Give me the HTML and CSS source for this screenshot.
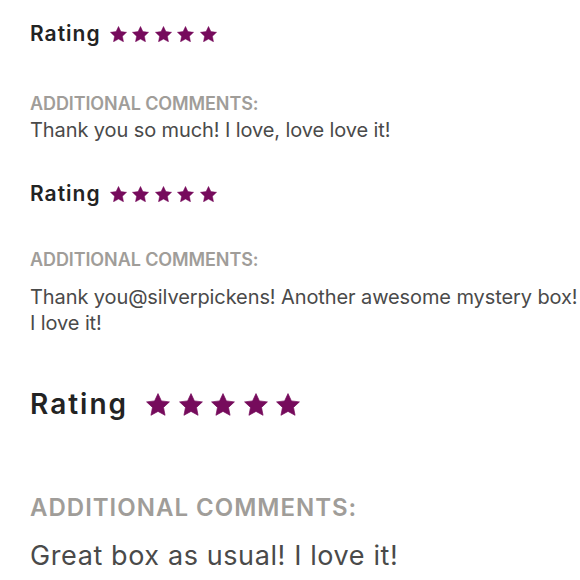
FILE: index.html
```html
<!DOCTYPE html>
<html>
<head>
<meta charset="utf-8">
<link rel="stylesheet" href="styles.css">
</head>
<body>
<svg width="0" height="0" class="defs">
  <defs>
    <symbol id="star" viewBox="0 0 24 23">
      <path d="M12 0.6 L15.41 7.91 L23.41 8.89 L17.52 14.39 L19.05 22.31 L12 18.4 L4.95 22.31 L6.48 14.39 L0.59 8.89 L8.59 7.91 Z" stroke-linejoin="round"/>
    </symbol>
  </defs>
</svg>
<main class="page">
  <section class="review review-one">
    <div class="rating-row">
      <span class="rating-label">Rating</span>
      <span class="stars">
        <svg class="star"><use href="#star"/></svg>
        <svg class="star"><use href="#star"/></svg>
        <svg class="star"><use href="#star"/></svg>
        <svg class="star"><use href="#star"/></svg>
        <svg class="star"><use href="#star"/></svg>
      </span>
    </div>
    <div class="comments-label">ADDITIONAL COMMENTS:</div>
    <p class="comment">Thank you so much! I love, love love it!</p>
  </section>
  <section class="review review-two">
    <div class="rating-row">
      <span class="rating-label">Rating</span>
      <span class="stars">
        <svg class="star"><use href="#star"/></svg>
        <svg class="star"><use href="#star"/></svg>
        <svg class="star"><use href="#star"/></svg>
        <svg class="star"><use href="#star"/></svg>
        <svg class="star"><use href="#star"/></svg>
      </span>
    </div>
    <div class="comments-label">ADDITIONAL COMMENTS:</div>
    <p class="comment">Thank you@silverpickens! Another awesome mystery box!<br>I love it!</p>
  </section>
  <section class="review review-three">
    <div class="rating-row">
      <span class="rating-label">Rating</span>
      <span class="stars">
        <svg class="star"><use href="#star"/></svg>
        <svg class="star"><use href="#star"/></svg>
        <svg class="star"><use href="#star"/></svg>
        <svg class="star"><use href="#star"/></svg>
        <svg class="star"><use href="#star"/></svg>
      </span>
    </div>
    <div class="comments-label">ADDITIONAL COMMENTS:</div>
    <p class="comment">Great box as usual! I love it!</p>
  </section>
</main>
</body>
</html>
```

FILE: styles.css
```css
html, body {
  margin: 0;
  padding: 0;
  background: #ffffff;
}

.defs {
  position: absolute;
  width: 0;
  height: 0;
  overflow: hidden;
}

.page {
  padding: 22px 0 0 30px;
  font-family: Inter, "Open Sans", sans-serif;
  overflow: hidden;
  height: 558px;
  white-space: nowrap;
}

.review {
  display: flex;
  flex-direction: column;
}

.rating-row {
  display: flex;
  align-items: center;
  height: 24px;
}

.rating-label {
  font-size: 21px;
  line-height: 24px;
  font-weight: 600;
  letter-spacing: 1px;
  color: #232323;
}

.stars {
  display: flex;
  gap: 5.6px;
  margin-left: 9px;
}

.star {
  width: 17px;
  height: 16.3px;
  fill: #760b5c;
  stroke: #760b5c;
  stroke-width: 0.7;
}

.comments-label {
  font-size: 18px;
  line-height: 22px;
  font-weight: 600;
  letter-spacing: -0.1px;
  color: #a09d99;
  margin-top: 47px;
}

.comment {
  margin: 2px 0 0;
  font-size: 20px;
  line-height: 26px;
  letter-spacing: -0.1px;
  color: #4a4a4a;
}

.review-two {
  margin-top: 39px;
}

.review-two .comments-label {
  margin-top: 43px;
}

.review-two .comment {
  margin-top: 13px;
}

.review-three {
  margin-top: 51px;
}

.review-three .rating-row {
  height: 34px;
}

.review-three .rating-label {
  font-size: 28px;
  line-height: 34px;
  letter-spacing: 2px;
}

.review-three .stars {
  gap: 8.5px;
  margin-left: 18px;
}

.review-three .star {
  width: 24px;
  height: 23px;
}

.review-three .comments-label {
  font-size: 24px;
  line-height: 28px;
  letter-spacing: 1px;
  margin-top: 73px;
}

.review-three .comment {
  font-size: 27px;
  line-height: 34px;
  letter-spacing: 0.6px;
  margin-top: 17px;
}
```
